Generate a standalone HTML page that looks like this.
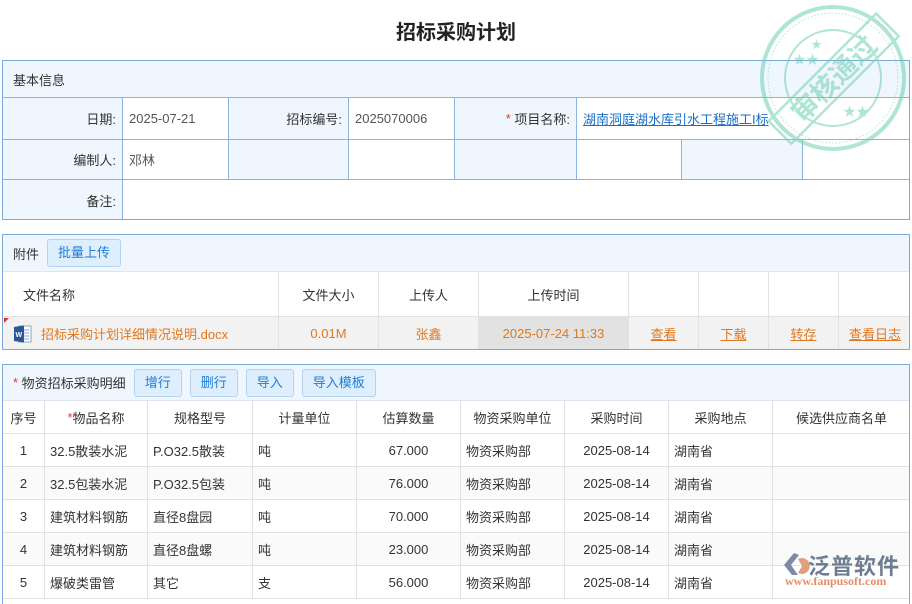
<!DOCTYPE html>
<html><head><meta charset="utf-8"><style>
*{box-sizing:border-box;margin:0;padding:0}
body{width:912px;height:596px;overflow:hidden;background:#fff;font-family:"Liberation Sans","Noto Sans CJK SC",sans-serif;font-size:13px;color:#333;position:relative}
.abs{position:absolute}
.title{left:0;width:912px;top:16px;text-align:center;font-size:20px;font-weight:bold;color:#222}
.box{position:absolute;left:2px;width:908px;border:1px solid #7aaadb;overflow:hidden}
.c{position:absolute;display:flex;align-items:center;border-right:1px solid #8cb4dc;border-bottom:1px solid #8cb4dc}
.lbl{background:#f0f6fe;justify-content:flex-end;padding-right:6px}
.val{padding-left:6px;color:#555}
.hdr{background:#f0f6fe;display:flex;align-items:center;padding-left:10px;position:absolute;left:0;width:908px}
.btn{display:inline-block;background:#ddeefc;border:1px solid #b5d3ef;border-radius:3px;color:#1e7ed8;padding:0 10px;height:28px;line-height:26px;margin-left:8px}
.t{position:absolute;display:flex;align-items:center;justify-content:center;border-right:1px solid #e2e2e2;border-bottom:1px solid #e2e2e2}
.o{color:#e0781e}
.u{color:#e0781e;text-decoration:underline}
</style></head><body>
<div class="abs title">招标采购计划</div>

<div class="box" style="top:60px;height:160px">
 <div class="hdr" style="top:0;height:37px;border-bottom:1px solid #8cb4dc">基本信息</div>
 <div class="c lbl" style="left:0;top:37px;width:120px;height:42px">日期:</div>
 <div class="c val" style="left:120px;top:37px;width:106px;height:42px">2025-07-21</div>
 <div class="c lbl" style="left:226px;top:37px;width:120px;height:42px">招标编号:</div>
 <div class="c val" style="left:346px;top:37px;width:106px;height:42px">2025070006</div>
 <div class="c lbl" style="left:452px;top:37px;width:122px;height:42px"><span style="color:#e33">*</span>&nbsp;项目名称:</div>
 <div class="c val" style="left:574px;top:37px;width:334px;height:42px;border-right:none"><span style="color:#1a6fc9;text-decoration:underline">湖南洞庭湖水库引水工程施工I标</span></div>
 <div class="c lbl" style="left:0;top:79px;width:120px;height:40px">编制人:</div>
 <div class="c val" style="left:120px;top:79px;width:106px;height:40px">邓林</div>
 <div class="c lbl" style="left:226px;top:79px;width:120px;height:40px"></div>
 <div class="c val" style="left:346px;top:79px;width:106px;height:40px"></div>
 <div class="c lbl" style="left:452px;top:79px;width:122px;height:40px"></div>
 <div class="c val" style="left:574px;top:79px;width:105px;height:40px"></div>
 <div class="c lbl" style="left:679px;top:79px;width:121px;height:40px"></div>
 <div class="c val" style="left:800px;top:79px;width:108px;height:40px;border-right:none"></div>
 <div class="c lbl" style="left:0;top:119px;width:120px;height:40px;border-bottom:none">备注:</div>
 <div class="c val" style="left:120px;top:119px;width:788px;height:40px;border:none"></div>
</div>

<div class="box" style="top:234px;height:116px">
 <div class="hdr" style="top:0;height:37px;border-bottom:1px solid #dde6f0">附件<span class="btn" style="margin-left:8px">批量上传</span></div>
 <div class="t" style="left:0;top:37px;width:276px;height:45px;justify-content:flex-start;padding-left:20px">文件名称</div>
 <div class="t" style="left:276px;top:37px;width:100px;height:45px">文件大小</div>
 <div class="t" style="left:376px;top:37px;width:100px;height:45px">上传人</div>
 <div class="t" style="left:476px;top:37px;width:150px;height:45px">上传时间</div>
 <div class="t" style="left:626px;top:37px;width:70px;height:45px"></div>
 <div class="t" style="left:696px;top:37px;width:70px;height:45px"></div>
 <div class="t" style="left:766px;top:37px;width:70px;height:45px"></div>
 <div class="t" style="left:836px;top:37px;width:72px;height:45px;border-right:none"></div>
 <div style="position:absolute;left:0;top:82px;width:908px;height:33px;background:#f2f2f2"></div>
 <div style="position:absolute;left:1px;top:83px;width:0;height:0;border-top:5px solid #d33;border-right:5px solid transparent"></div>
 <div class="t o" style="left:0;top:82px;width:276px;height:33px;justify-content:flex-start;padding-left:10px;border-bottom:none">
  <svg width="20" height="20" viewBox="0 0 20 20" style="margin-right:8px"><rect x="6" y="2" width="12" height="16" fill="#fff" stroke="#8aa4c8"/><path d="M9 6h7M9 9h7M9 12h7M9 15h7" stroke="#8aa4c8"/><path d="M1 3l10-1.5v17L1 17z" fill="#2b5797"/><text x="2.5" y="13" font-size="7" fill="#fff" font-family="Liberation Sans" font-weight="bold">W</text></svg>招标采购计划详细情况说明.docx</div>
 <div class="t o" style="left:276px;top:82px;width:100px;height:33px;border-bottom:none">0.01M</div>
 <div class="t o" style="left:376px;top:82px;width:100px;height:33px;border-bottom:none">张鑫</div>
 <div class="t o" style="left:476px;top:82px;width:150px;height:33px;background:#e2e2e2;border-bottom:none">2025-07-24 11:33</div>
 <div class="t" style="left:626px;top:82px;width:70px;height:33px;border-bottom:none"><span class="u">查看</span></div>
 <div class="t" style="left:696px;top:82px;width:70px;height:33px;border-bottom:none"><span class="u">下载</span></div>
 <div class="t" style="left:766px;top:82px;width:70px;height:33px;border-bottom:none"><span class="u">转存</span></div>
 <div class="t" style="left:836px;top:82px;width:72px;height:33px;border:none"><span class="u">查看日志</span></div>
</div>

<div class="box" style="top:364px;height:240px;border-bottom:none">
 <div class="hdr" style="top:0;height:36px;border-bottom:1px solid #dde6f0;padding-left:10px"><span style="color:#e33">*</span>&nbsp;物资招标采购明细<span class="btn" style="margin-left:8px">增行</span><span class="btn">删行</span><span class="btn">导入</span><span class="btn">导入模板</span></div>
 <div id="tbl"></div>
</div>
<script>
var cols=[[0,42],[42,103],[145,105],[250,104],[354,104],[458,104],[562,104],[666,104],[770,138]];
var hd=['序号','<span style="color:#e33">*</span> 物品名称','规格型号','计量单位','估算数量','物资采购单位','采购时间','采购地点','候选供应商名单'];
var rows=[['1','32.5散装水泥','P.O32.5散装','吨','67.000','物资采购部','2025-08-14','湖南省',''],
['2','32.5包装水泥','P.O32.5包装','吨','76.000','物资采购部','2025-08-14','湖南省',''],
['3','建筑材料钢筋','直径8盘园','吨','70.000','物资采购部','2025-08-14','湖南省',''],
['4','建筑材料钢筋','直径8盘螺','吨','23.000','物资采购部','2025-08-14','湖南省',''],
['5','爆破类雷管','其它','支','56.000','物资采购部','2025-08-14','湖南省','']];
var al=['c','l','l','l','c','l','c','l','l'];
var h='';
hd.forEach(function(t,i){h+='<div class="t" style="left:'+cols[i][0]+'px;top:36px;width:'+cols[i][1]+'px;height:33px;color:#333">'+t+'</div>';});
rows.forEach(function(r,j){var top=69+j*33;var bg=j%2?'#fafafa':'#fff';
r.forEach(function(t,i){var s=al[i]=='l'?'justify-content:flex-start;padding-left:5px;':'';
h+='<div class="t" style="left:'+cols[i][0]+'px;top:'+top+'px;width:'+cols[i][1]+'px;height:33px;background:'+bg+';'+s+'">'+t+'</div>';});});
document.getElementById('tbl').innerHTML=h;
</script>

<svg class="abs" style="left:755px;top:0" width="157" height="160" viewBox="0 0 157 160">
 <g opacity="0.55" fill="none" stroke="#6fd0b0">
  <circle cx="78" cy="78" r="71" stroke-width="4"/>
  <circle cx="78" cy="78" r="65" stroke-width="1" stroke-dasharray="1.5 2"/>
  <circle cx="78" cy="78" r="48" stroke-width="2"/>
  <g transform="rotate(-45 78 78)">
   <rect x="2" y="63" width="152" height="32" stroke-width="2.5"/>
   <text x="78" y="89" text-anchor="middle" font-size="27" font-weight="bold" fill="#6fd0b0" stroke="none" font-family="Liberation Sans,Noto Sans CJK SC,sans-serif">审核通过</text>
  </g>
  <text x="38" y="64" font-size="13" fill="#6fd0b0" stroke="none">★★</text>
  <text x="56" y="48" font-size="11" fill="#6fd0b0" stroke="none">★</text>
  <text x="88" y="116" font-size="13" fill="#6fd0b0" stroke="none">★★</text>
 </g>
</svg>

<div class="abs" style="left:782px;top:549px;width:130px;height:40px">
 <svg class="abs" style="left:0;top:2" width="30" height="26" viewBox="0 0 30 26"><path d="M12 2L2 14l8 10h6L9 14 17 4z" fill="#7a8aa8"/><path d="M16 8a8 8 0 1 1 0 14l4-7z" fill="#e0a080"/></svg>
 <div class="abs" style="left:26px;top:0;font-size:22px;font-weight:bold;color:#6f7d92;letter-spacing:1px">泛普软件</div>
 <div class="abs" style="left:3px;top:25px;font-size:12px;color:#e0906a;font-family:'Liberation Serif',serif;font-weight:bold">www.fanpusoft.com</div>
</div>
</body></html>
